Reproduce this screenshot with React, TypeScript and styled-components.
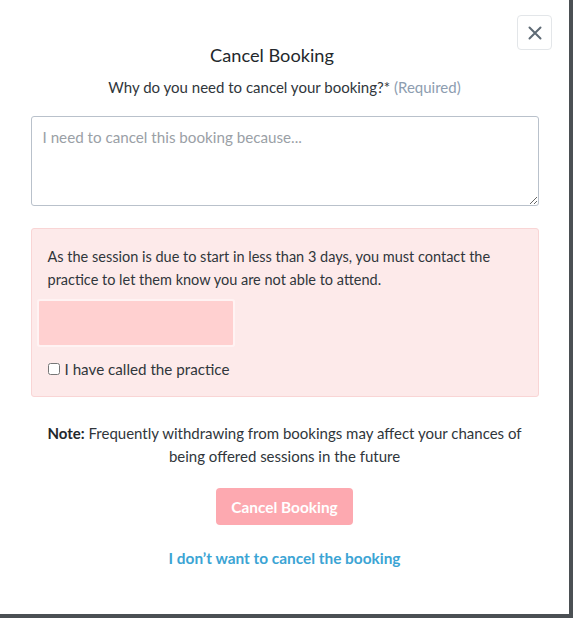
import React, { useState } from "react";
import styled, { createGlobalStyle } from "styled-components";

const GlobalStyle = createGlobalStyle`
  html, body {
    margin: 0;
    padding: 0;
    background: #4b5054;
  }
  body {
    font-family: Lato, "Open Sans", Arial, sans-serif;
    color: #30363b;
  }
`;

const Overlay = styled.div`
  width: 573px;
  height: 618px;
  background: #4b5054;
  overflow: hidden;
`;

const Modal = styled.div`
  width: 569px;
  height: 614px;
  background: #fff;
  display: flex;
  flex-direction: column;
  align-items: center;
  box-sizing: border-box;
`;

const Header = styled.div`
  display: flex;
  align-items: flex-start;
  width: 100%;
  box-sizing: border-box;
  padding: 15px 17px 0 30px;
  gap: 3px;
`;

const Title = styled.h2`
  flex: 1;
  margin: 29px 0 0;
  text-align: center;
  font-size: 18.2px;
  line-height: 22px;
  font-weight: 400;
  color: #23282c;
`;

const CloseButton = styled.button`
  width: 35px;
  height: 35px;
  padding: 0;
  display: flex;
  align-items: center;
  justify-content: center;
  background: #fff;
  border: 1px solid #e3e6e9;
  border-radius: 4px;
  cursor: pointer;
`;

const Question = styled.p`
  margin: 11px 0 0;
  font-size: 15px;
  line-height: 20px;
  color: #30363b;
`;

const Required = styled.span`
  color: #8d9db0;
`;

const Reason = styled.textarea`
  margin-top: 19px;
  width: 508px;
  height: 90px;
  box-sizing: border-box;
  border: 1px solid #b9c1cb;
  border-radius: 3px;
  padding: 10px 11px;
  font-family: Lato, "Open Sans", Arial, sans-serif;
  font-size: 15.2px;
  line-height: 20px;
  color: #30363b;

  &::placeholder {
    color: #9aa0a6;
  }
`;

const Alert = styled.div`
  margin-top: 22px;
  width: 508px;
  box-sizing: border-box;
  background: #fdeaea;
  border: 1px solid #f9d5d5;
  border-radius: 3px;
  padding: 16px 17px 17px 16px;
`;

const AlertText = styled.p`
  margin: 0;
  font-size: 14.5px;
  line-height: 23px;
  color: #30363b;
`;

const Redacted = styled.div`
  margin: 10px 0 0 -9px;
  width: 194px;
  height: 44px;
  background: #ffd0d0;
  border-radius: 1px;
  box-shadow: 0 0 0 2px #fff3f3;
`;

const CheckRow = styled.label`
  margin-top: 14px;
  display: flex;
  align-items: center;
  gap: 5px;
  font-size: 15.2px;
  line-height: 20px;
  color: #30363b;

  input {
    margin: 0;
    width: 12px;
    height: 12px;
  }
`;

const Note = styled.p`
  margin: 25px 0 0;
  text-align: center;
  font-size: 15px;
  line-height: 23px;
  color: #30363b;

  strong {
    font-weight: 700;
    color: #23282c;
  }
`;

const SubmitButton = styled.button<{ disabled?: boolean }>`
  margin-top: 20px;
  width: 137px;
  height: 37px;
  border: none;
  border-radius: 4px;
  background: ${(props) => (props.disabled ? "#fda9b0" : "#f5606d")};
  color: #fff;
  font-family: Lato, "Open Sans", Arial, sans-serif;
  font-size: 15.4px;
  font-weight: 700;
`;

const KeepLink = styled.a`
  margin-top: 23px;
  font-size: 15.4px;
  line-height: 20px;
  font-weight: 700;
  color: #3ba4d4;
  text-decoration: none;
  cursor: pointer;
`;

const App: React.FC = () => {
  const [called, setCalled] = useState<boolean>(false);
  const [reason, setReason] = useState<string>("");

  return (
    <Overlay>
      <GlobalStyle />
      <Modal>
        <Header>
          <Title>Cancel Booking</Title>
          <CloseButton aria-label="Close">
            <svg width="14" height="14" viewBox="0 0 14 14">
              <path
                d="M1.5 1.5 L12.5 12.5 M12.5 1.5 L1.5 12.5"
                stroke="#5e6a75"
                strokeWidth="2"
                strokeLinecap="round"
              />
            </svg>
          </CloseButton>
        </Header>

        <Question>
          Why do you need to cancel your booking?* <Required>(Required)</Required>
        </Question>

        <Reason
          placeholder="I need to cancel this booking because..."
          value={reason}
          onChange={(e) => setReason(e.target.value)}
        />

        <Alert>
          <AlertText>
            As the session is due to start in less than 3 days, you must contact the
            <br />
            practice to let them know you are not able to attend.
          </AlertText>
          <Redacted />
          <CheckRow>
            <input
              type="checkbox"
              checked={called}
              onChange={() => setCalled(!called)}
            />
            I have called the practice
          </CheckRow>
        </Alert>

        <Note>
          <strong>Note:</strong> Frequently withdrawing from bookings may affect your chances of
          <br />
          being offered sessions in the future
        </Note>

        <SubmitButton disabled={!called || !reason}>Cancel Booking</SubmitButton>

        <KeepLink>I don&rsquo;t want to cancel the booking</KeepLink>
      </Modal>
    </Overlay>
  );
};

export default App;
